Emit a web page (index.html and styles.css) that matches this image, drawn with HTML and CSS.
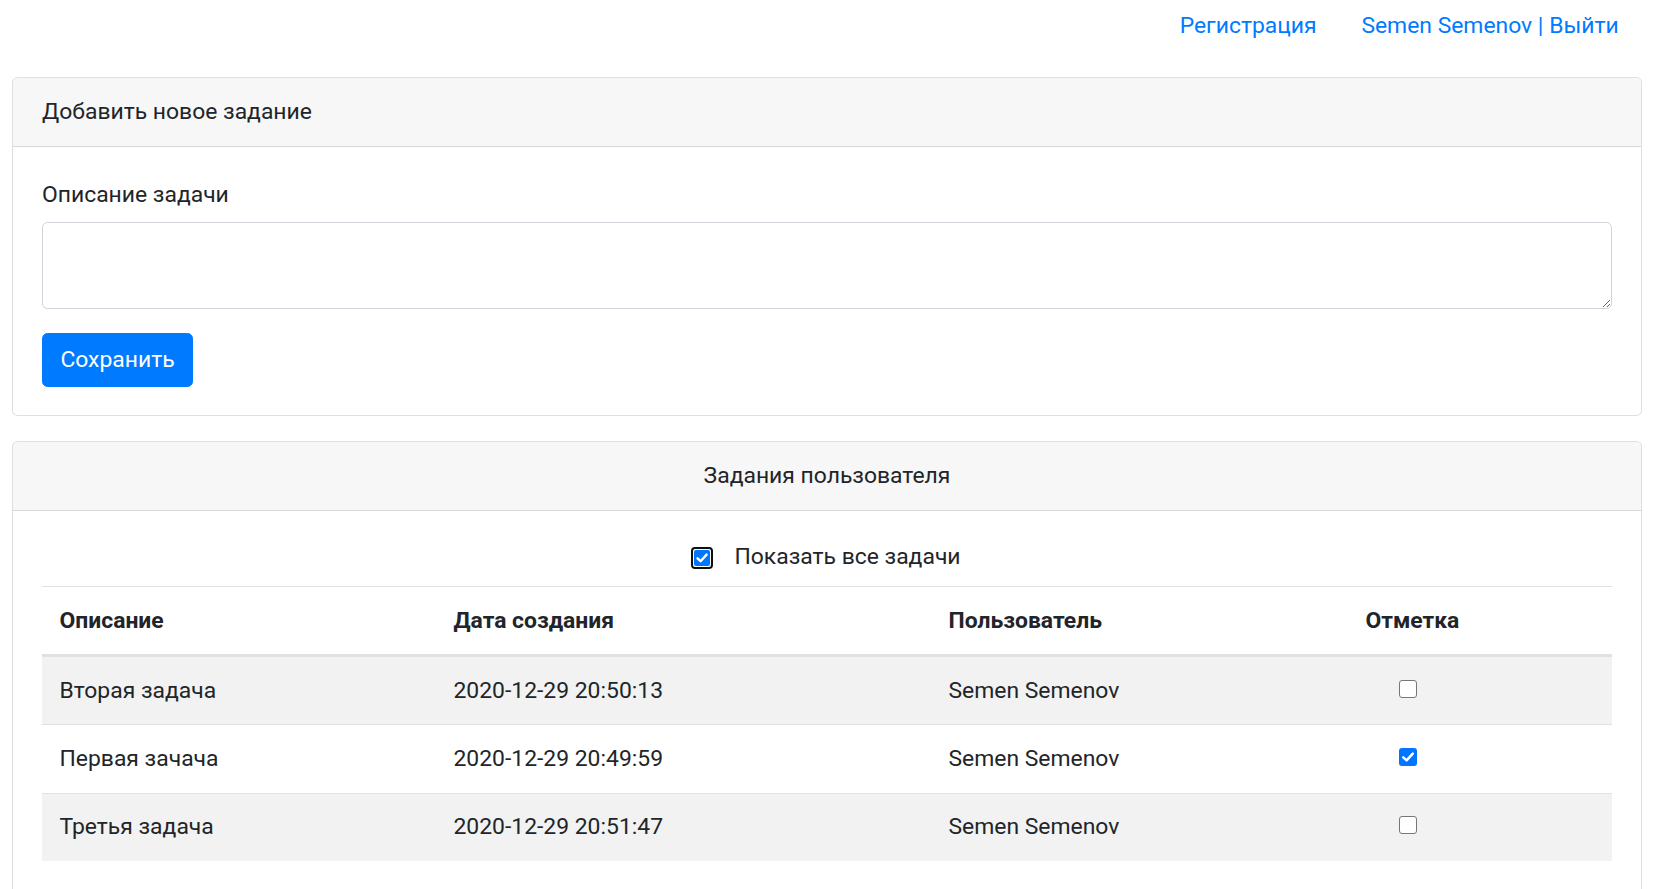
FILE: index.html
```html
<!DOCTYPE html>
<html lang="ru">
<head>
<meta charset="utf-8">
<title>Задания</title>
<link rel="stylesheet" href="styles.css">
</head>
<body>
<header class="topnav">
  <a class="nav-link" href="#">Регистрация</a>
  <a class="nav-link" href="#">Semen Semenov | Выйти</a>
</header>
<main class="page">
  <section class="card">
    <div class="card-header">Добавить новое задание</div>
    <div class="card-body card-body-form">
      <form class="task-form">
        <label class="form-label" for="desc">Описание задачи</label>
        <textarea id="desc" class="form-control" rows="2"></textarea>
        <button type="button" class="btn-primary">Сохранить</button>
      </form>
    </div>
  </section>

  <section class="card card-second">
    <div class="card-header center">Задания пользователя</div>
    <div class="card-body">
      <label class="form-check">
        <span class="cb cb-focus"><span class="cb-inner checked"><svg viewBox="0 0 16 16" width="16" height="16"><path d="M3.5 8.3 L6.6 11.2 L12.6 4.6" fill="none" stroke="#fff" stroke-width="2.4" stroke-linecap="round" stroke-linejoin="round"/></svg></span></span>
        <span class="check-label">Показать все задачи</span>
      </label>
      <table class="table">
        <colgroup>
          <col class="c1"><col class="c2"><col class="c3"><col class="c4">
        </colgroup>
        <thead>
          <tr><th>Описание</th><th>Дата создания</th><th>Пользователь</th><th class="center th-mark">Отметка</th></tr>
        </thead>
        <tbody>
          <tr>
            <td>Вторая задача</td><td>2020-12-29 20:50:13</td><td>Semen Semenov</td>
            <td class="center"><span class="cb-box"></span></td>
          </tr>
          <tr>
            <td>Первая зачача</td><td>2020-12-29 20:49:59</td><td>Semen Semenov</td>
            <td class="center"><span class="cb-box checked"><svg viewBox="0 0 18 18" width="18" height="18"><path d="M4.3 9.3 L7.6 12.4 L13.8 5.6" fill="none" stroke="#fff" stroke-width="2.5" stroke-linecap="round" stroke-linejoin="round"/></svg></span></td>
          </tr>
          <tr>
            <td>Третья задача</td><td>2020-12-29 20:51:47</td><td>Semen Semenov</td>
            <td class="center"><span class="cb-box"></span></td>
          </tr>
        </tbody>
      </table>
    </div>
  </section>
</main>
</body>
</html>
```

FILE: styles.css
```css
* { box-sizing: border-box; }

html, body {
  margin: 0;
  padding: 0;
  background: #fff;
}

body {
  font-family: Roboto, "Noto Sans", "Liberation Sans", sans-serif;
  font-size: 22.9px;
  line-height: 34.35px;
  color: #212529;
  overflow: hidden;
}

.topnav {
  display: flex;
  justify-content: flex-end;
  height: 77px;
  padding: 9px 15px 0 0;
}

.nav-link {
  color: #007bff;
  text-decoration: none;
  padding: 0 22.4px;
  height: 34.35px;
}

.page {
  padding: 0 14px 0 12px;
}

.card {
  border: 1px solid rgba(0, 0, 0, 0.125);
  border-radius: 5.6px;
  background: #fff;
}

.card-second {
  margin-top: 25px;
}

.card-header {
  background: #f7f7f7;
  border-bottom: 1px solid rgba(0, 0, 0, 0.125);
  padding: 17px 29px 16.6px 29px;
  border-radius: 5.6px 5.6px 0 0;
}

.center { text-align: center; }

.card-body {
  padding: 29px 29px 40px 29px;
}

.card-body-form {
  padding: 31px 29px 28px 29px;
}

.task-form {
  display: flex;
  flex-direction: column;
  align-items: flex-start;
}

.form-label {
  display: block;
  margin-bottom: 10px;
}

.form-control {
  display: block;
  width: 100%;
  height: 87px;
  padding: 8.4px 16.8px;
  font: inherit;
  color: #495057;
  background: #fff;
  border: 1.4px solid #ced4da;
  border-radius: 5.6px;
  resize: vertical;
  margin: 0 0 24px 0;
}

.btn-primary {
  font: inherit;
  color: #fff;
  background: #007bff;
  border: 1.4px solid #007bff;
  border-radius: 5.6px;
  height: 54px;
  padding: 0 16.8px;
  width: 151px;
  cursor: pointer;
}

.form-check {
  display: flex;
  justify-content: center;
  align-items: center;
  gap: 21px;
  height: 34px;
  margin-bottom: 12px;
  margin-right: 2px;
}

.cb {
  display: inline-flex;
  width: 22px;
  height: 22px;
  border: 2px solid #101010;
  border-radius: 4px;
  padding: 1px;
  background: #fff;
  margin-top: 1px;
}

.cb-inner {
  display: block;
  width: 16px;
  height: 16px;
  border-radius: 2px;
  background: #0075ff;
}

.cb-inner svg, .cb-box svg { display: block; }

.table {
  width: 100%;
  border-collapse: collapse;
  table-layout: fixed;
}

.c1 { width: 394px; }
.c2 { width: 495px; }
.c3 { width: 277px; }
.c4 { width: 404px; }

.table th, .table td {
  padding: 16.4px 16.8px 16.4px 17.5px;
  border-top: 1px solid #dee2e6;
  text-align: left;
  vertical-align: top;
}

.table th {
  font-weight: 700;
  border-bottom: 3px solid #dee2e6;
}

.table th.center, .table td.center {
  text-align: center;
  padding-right: 21px;
  padding-left: 16.8px;
  vertical-align: middle;
}

.table th.th-mark {
  padding-right: 12px;
}

.table tbody tr:nth-child(odd) {
  background: #f2f2f2;
}

.cb-box {
  display: inline-block;
  vertical-align: middle;
  width: 18px;
  height: 18px;
  border: 1.5px solid #767676;
  border-radius: 3px;
  background: #fff;
  margin-top: -6px;
}

.cb-box.checked {
  background: #0075ff;
  border: none;
}
```
